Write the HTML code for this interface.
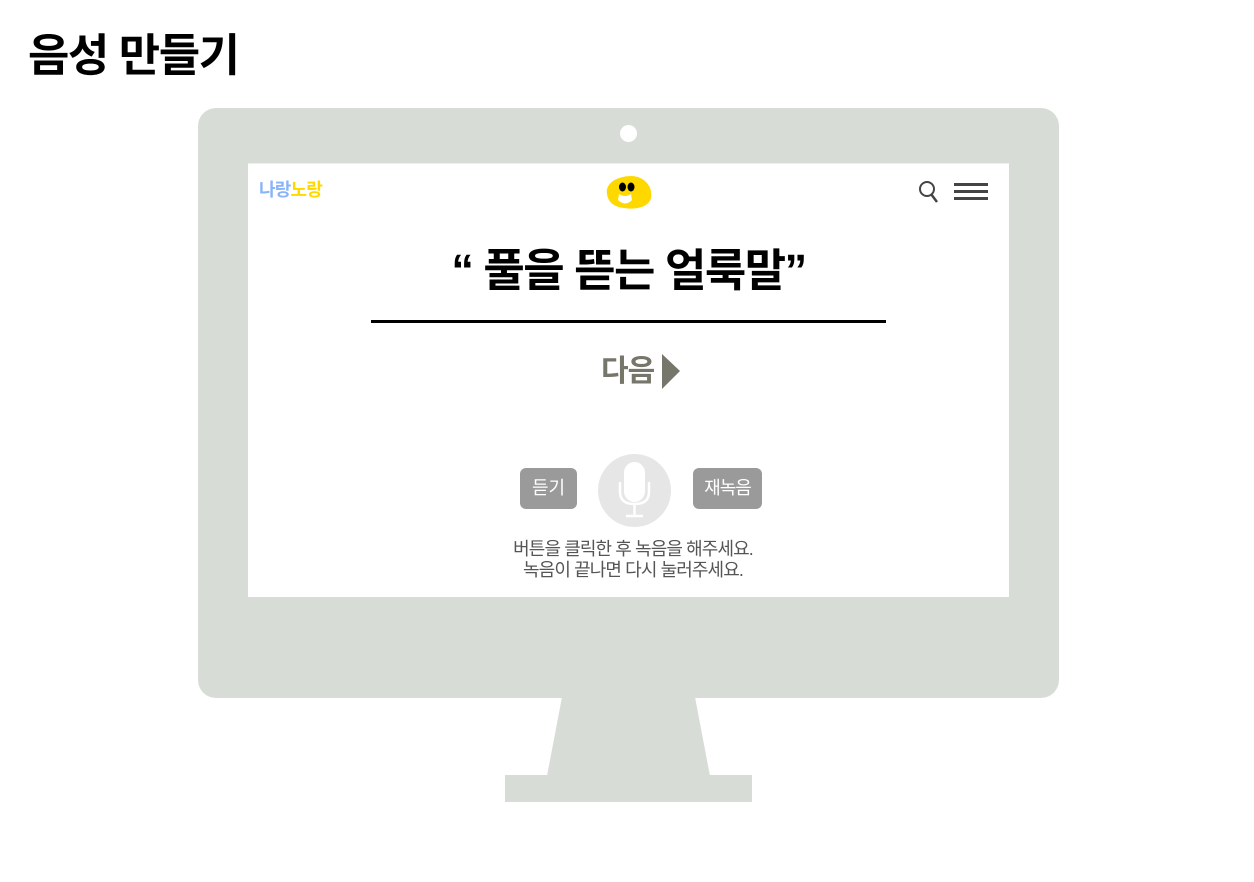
<!DOCTYPE html>
<html><head><meta charset="utf-8"><style>
*{margin:0;padding:0;box-sizing:border-box}
body{width:1254px;height:882px;background:#fff;position:relative;overflow:hidden;font-family:"Liberation Sans","Noto Sans CJK KR",sans-serif}
.a{position:absolute}
h1{position:absolute;left:28px;top:27px;font-size:45px;font-weight:700;letter-spacing:-1.5px;color:#000;line-height:58px}
</style></head><body>
<h1>음성 만들기</h1>
<div class="a" style="left:198px;top:108px;width:861px;height:590px;background:#d8dcd6;border-radius:18px"></div>
<div class="a" style="left:620px;top:125px;width:17px;height:17px;border-radius:50%;background:#fff"></div>
<div class="a" style="left:505px;top:775px;width:247px;height:27px;background:#d8dcd6"></div>
<svg class="a" style="left:540px;top:697px" width="180" height="80"><polygon points="22,0 155,0 170,79 7,79" fill="#d8dcd6"/></svg>
<div class="a" style="left:248px;top:163px;width:761px;height:434px;background:#fff;border-top:1px solid #eee"></div>
<div class="a" style="left:259px;top:178px;font-size:18px;font-weight:700;letter-spacing:-0.8px;line-height:24px"><span style="color:#8ab4f8">나랑</span><span style="color:#ffd800">노랑</span></div>
<svg class="a" style="left:604px;top:174px" width="50" height="38"><path d="M3,20 C1,10 12,2 28,2 C42,3 49,14 47,24 C45,33 32,36 20,34 C10,33 4,28 3,20Z" fill="#ffd800"/><ellipse cx="18.5" cy="13" rx="3.5" ry="4.5" fill="#000"/><ellipse cx="27" cy="13" rx="3.5" ry="4.5" fill="#000"/><path d="M15,20 Q21,24 27,20 L28,26 Q21,33 14,26Z" fill="#fff"/></svg>
<svg class="a" style="left:917px;top:179px" width="24" height="26"><circle cx="10" cy="10" r="7" fill="none" stroke="#444" stroke-width="2"/><line x1="14" y1="15" x2="20" y2="23" stroke="#444" stroke-width="2.5"/></svg>
<div class="a" style="left:954px;top:183px;width:34px;height:3px;background:#444"></div>
<div class="a" style="left:954px;top:190px;width:34px;height:3px;background:#444"></div>
<div class="a" style="left:954px;top:197px;width:34px;height:3px;background:#444"></div>
<div class="a" style="left:331px;top:240px;width:595px;text-align:center;font-size:45px;font-weight:700;letter-spacing:-1.5px;line-height:62px;color:#000">“ 풀을 뜯는 얼룩말”</div>
<div class="a" style="left:371px;top:320px;width:515px;height:3px;background:#000"></div>
<div class="a" style="left:601px;top:352px;font-size:30px;font-weight:700;color:#77766a;letter-spacing:-1px;line-height:40px">다음</div>
<svg class="a" style="left:662px;top:354px" width="20" height="36"><polygon points="0,0 18,17 0,35" fill="#77766a"/></svg>
<div class="a" style="left:520px;top:468px;width:57px;height:41px;background:#9a9a9a;border-radius:6px;color:#fff;font-size:18px;text-align:center;line-height:41px">듣기</div>
<div class="a" style="left:693px;top:468px;width:69px;height:41px;background:#9a9a9a;border-radius:6px;color:#fff;font-size:18px;text-align:center;line-height:41px;letter-spacing:-1px">재녹음</div>
<div class="a" style="left:598px;top:454px;width:73px;height:73px;border-radius:50%;background:#e6e6e6"></div>
<svg class="a" style="left:598px;top:454px" width="73" height="73"><rect x="26" y="8" width="21" height="40" rx="10.5" fill="#fff"/><path d="M22,28 V38 Q22,50 36.5,50 Q51,50 51,38 V28" fill="none" stroke="#fff" stroke-width="2.5"/><line x1="36.5" y1="50" x2="36.5" y2="62" stroke="#fff" stroke-width="2.5"/><line x1="28" y1="62" x2="45" y2="62" stroke="#fff" stroke-width="2.5"/></svg>
<div class="a" style="left:433px;top:539px;width:400px;text-align:center;font-size:18px;color:#555;line-height:21px;letter-spacing:-0.9px">버튼을 클릭한 후 녹음을 해주세요.<br>녹음이 끝나면 다시 눌러주세요.</div>
</body></html>
